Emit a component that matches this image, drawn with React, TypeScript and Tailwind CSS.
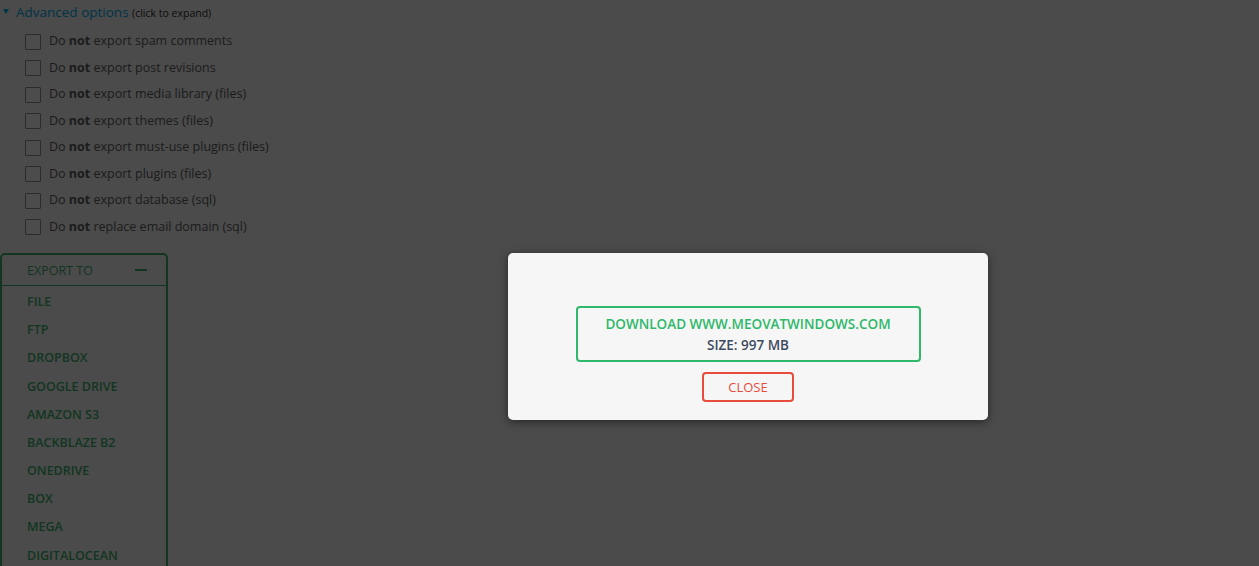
import { useState } from "react"

const options = [
  ["Do ", "not", " export spam comments"],
  ["Do ", "not", " export post revisions"],
  ["Do ", "not", " export media library (files)"],
  ["Do ", "not", " export themes (files)"],
  ["Do ", "not", " export must-use plugins (files)"],
  ["Do ", "not", " export plugins (files)"],
  ["Do ", "not", " export database (sql)"],
  ["Do ", "not", " replace email domain (sql)"],
]

const targets = [
  "FILE",
  "FTP",
  "DROPBOX",
  "GOOGLE DRIVE",
  "AMAZON S3",
  "BACKBLAZE B2",
  "ONEDRIVE",
  "BOX",
  "MEGA",
  "DIGITALOCEAN",
]

export default function App() {
  const [open, setOpen] = useState(true)

  return (
    <div
      className="relative h-[566px] overflow-hidden bg-[#fafafa] text-[#606060]"
      style={{ fontFamily: '"Open Sans", "Noto Sans", sans-serif' }}
    >
      {/* Advanced options */}
      <div className="pl-[3px] pt-[2px]">
        <div className="flex items-center gap-[7px]">
          <svg width="6" height="5" viewBox="0 0 6 5" className="mb-[1px]">
            <path d="M0 0h6L3 5z" fill="#00aff0" />
          </svg>
          <span className="text-[13.5px] text-[#00aff0]">
            Advanced options <span className="text-[10.5px] text-[#303030]">(click to expand)</span>
          </span>
        </div>
        <ul className="mt-[6px] pl-[22px]">
          {options.map((o, i) => (
            <li key={i} className="flex h-[26.5px] items-center gap-[8px] text-[12.5px]">
              <span className="h-[16px] w-[16px] shrink-0 rounded-[1px] border border-[#8c8f94] bg-white" />
              <span>
                {o[0]}
                <b className="font-bold">{o[1]}</b>
                {o[2]}
              </span>
            </li>
          ))}
        </ul>
      </div>

      {/* Export to */}
      <div className="mt-[13px] w-[168px] rounded-t-[5px] border-2 border-b-0 border-[#3fb56f]">
        <div className="flex h-[31px] items-center justify-between border-b border-[#3fb56f] pt-[3px] pl-[25px] pr-[19px] text-[12.5px] text-[#3fb56f]">
          <span>EXPORT TO</span>
          <span className="mb-[3px] h-[2px] w-[12px] bg-[#3fb56f]" />
        </div>
        <ul className="pt-[2px]">
          {targets.map((t) => (
            <li key={t} className="flex h-[28.2px] items-center pl-[25px] text-[12.5px] font-semibold text-[#3fb56f]">
              {t}
            </li>
          ))}
        </ul>
      </div>

      {open && (
        <>
          <div className="absolute inset-0 bg-black/70" />
          <div className="absolute left-[508px] top-[253px] w-[480px] rounded-[5px] bg-[#f6f6f6] pt-[53px] pb-[18px] shadow-[0_2px_8px_rgba(0,0,0,0.5)]">
            <div className="flex flex-col items-center gap-[10px]">
              <a className="flex h-[56px] w-[345px] cursor-pointer flex-col items-center justify-center rounded-[4px] border-2 border-[#2eb86a] pt-[2px] leading-[21px]">
                <span className="text-[13.5px] font-semibold text-[#2eb86a]">DOWNLOAD WWW.MEOVATWINDOWS.COM</span>
                <span className="text-[13.5px] font-semibold text-[#3d4b5e]">SIZE: 997 MB</span>
              </a>
              <button
                onClick={() => setOpen(false)}
                className="h-[30px] w-[92px] rounded-[4px] border-2 border-[#e74c3c] pt-[2px] text-[13px] text-[#e74c3c]"
              >
                CLOSE
              </button>
            </div>
          </div>
        </>
      )}
    </div>
  )
}
